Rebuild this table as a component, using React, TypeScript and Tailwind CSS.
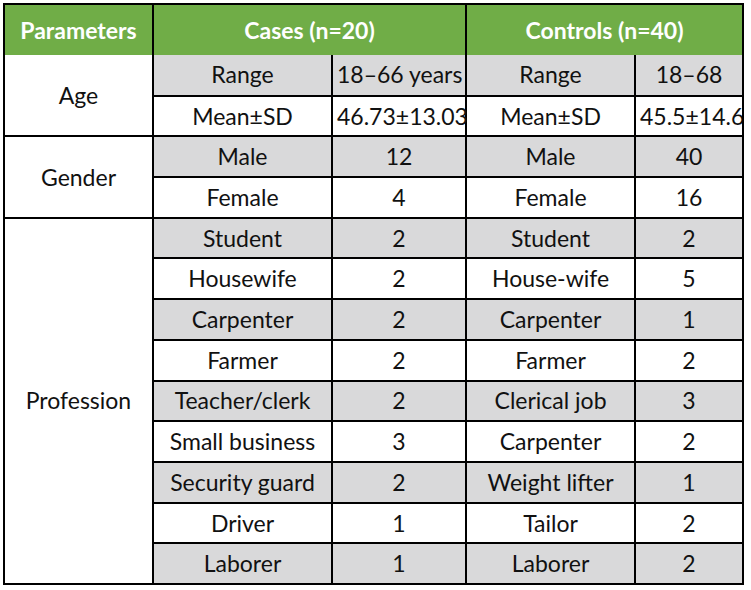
const rows: { param?: string; span?: number; cases: [string, string]; controls: [string, string] }[] = [
  { param: 'Age', span: 2, cases: ['Range', '18–66 years'], controls: ['Range', '18–68'] },
  { cases: ['Mean±SD', '46.73±13.03'], controls: ['Mean±SD', '45.5±14.6'] },
  { param: 'Gender', span: 2, cases: ['Male', '12'], controls: ['Male', '40'] },
  { cases: ['Female', '4'], controls: ['Female', '16'] },
  { param: 'Profession', span: 9, cases: ['Student', '2'], controls: ['Student', '2'] },
  { cases: ['Housewife', '2'], controls: ['House-wife', '5'] },
  { cases: ['Carpenter', '2'], controls: ['Carpenter', '1'] },
  { cases: ['Farmer', '2'], controls: ['Farmer', '2'] },
  { cases: ['Teacher/clerk', '2'], controls: ['Clerical job', '3'] },
  { cases: ['Small business', '3'], controls: ['Carpenter', '2'] },
  { cases: ['Security guard', '2'], controls: ['Weight lifter', '1'] },
  { cases: ['Driver', '1'], controls: ['Tailor', '2'] },
  { cases: ['Laborer', '1'], controls: ['Laborer', '2'] },
];

export default function App() {
  return (
    <div className="w-[751px] h-[590px] bg-white pl-[3px] pt-[3px] font-['Lato','Open_Sans',sans-serif] text-[#111]">
      <table className="w-[741px] table-fixed border-collapse text-[23px] leading-tight">
        <colgroup>
          <col className="w-[149px]" />
          <col className="w-[179px]" />
          <col className="w-[134px]" />
          <col className="w-[169px]" />
          <col className="w-[108px]" />
        </colgroup>
        <thead>
          <tr className="h-[51px] bg-[#70ad47] text-white font-bold">
            <th className="border-2 border-b-0 border-black px-1 text-center whitespace-nowrap">Parameters</th>
            <th colSpan={2} className="border-2 border-b-0 border-black px-1 text-center">
              Cases (n=20)
            </th>
            <th colSpan={2} className="border-2 border-b-0 border-black px-1 text-center">
              Controls (n=40)
            </th>
          </tr>
        </thead>
        <tbody>
          {rows.map((r, i) => {
            const shade = i % 2 === 0 ? 'bg-[#d9d9da]' : 'bg-white';
            const top = i === 0 ? 'border-t-0' : '';
            return (
              <tr key={i} className="h-[40.7px]">
                {r.param && (
                  <td rowSpan={r.span} className={`border-2 border-black bg-white px-1 text-center ${top}`}>
                    {r.param}
                  </td>
                )}
                {[...r.cases, ...r.controls].map((c, j) => (
                  // last column clips its overflow at the table edge, like the source table
                  <td
                    key={j}
                    className={`border-2 border-black ${shade} px-1 text-center whitespace-nowrap ${
                      j === 3 ? 'overflow-hidden' : ''
                    } ${top}`}
                  >
                    {c}
                  </td>
                ))}
              </tr>
            );
          })}
        </tbody>
      </table>
    </div>
  );
}
